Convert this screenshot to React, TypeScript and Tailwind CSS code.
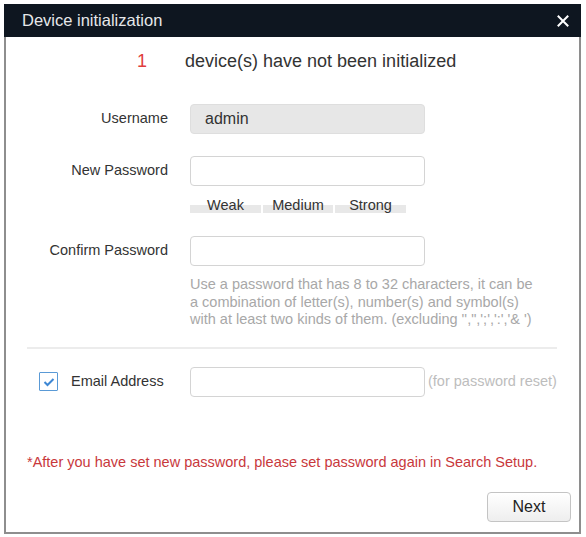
import React from "react";

const font = { fontFamily: '"Liberation Sans", Arial, sans-serif' };

function Row({ label, children }: { label: string; children: React.ReactNode }) {
  return (
    <div className="flex items-center">
      <div className="w-[162px] text-right text-[14.5px] text-[#333]">{label}</div>
      <div className="ml-[22px]">{children}</div>
    </div>
  );
}

export default function App() {
  return (
    <div className="w-[586px] h-[537px] bg-white pt-[4px] pl-[4px]" style={font}>
      <div className="w-[577px] h-[530px] border-2 border-t-0 border-[#8e8e8e] flex flex-col">
        <div className="h-[33px] bg-[#0e1620] flex items-center justify-between pl-[18px] pr-[10px] -mx-[2px]">
          <span className="text-[16.5px] text-[#e6e8ea]">Device initialization</span>
          <svg width="12" height="12" viewBox="0 0 12 12" className="mr-[2px]">
            <path d="M1.5 1.5 L10.5 10.5 M10.5 1.5 L1.5 10.5" stroke="#ffffff" strokeWidth="2" strokeLinecap="square" />
          </svg>
        </div>
        <div className="flex flex-col">
          <div className="flex items-center h-[24px] mt-[12px] pl-[131px]">
            <span className="w-[48px] text-[18px] text-[#e03c3c]">1</span>
            <span className="text-[18px] text-[#333]">device(s) have not been initialized</span>
          </div>
          <div className="mt-[31px]">
            <Row label="Username">
              <div className="w-[235px] h-[30px] rounded-[4px] bg-[#e7e7e7] border border-[#dedede] flex items-center pl-[14px] text-[16px] text-[#333]">
                admin
              </div>
            </Row>
          </div>
          <div className="mt-[22px]">
            <Row label="New Password">
              <div className="w-[235px] h-[30px] rounded-[4px] bg-white border border-[#d4d4d4]" />
            </Row>
          </div>
          <div className="mt-[11px] flex pl-[184px] gap-[2px]">
            {["Weak", "Medium", "Strong"].map((t, i) => (
              <div
                key={t}
                className={`h-[17px] leading-[17px] text-center text-[14.5px] text-[#333] bg-[linear-gradient(to_bottom,transparent_8px,#e8e8e8_8px,#e8e8e8_16px,transparent_16px)] ${i === 1 ? "w-[70px]" : "w-[71px]"}`}
              >
                {t}
              </div>
            ))}
          </div>
          <div className="mt-[22px]">
            <Row label="Confirm Password">
              <div className="w-[235px] h-[30px] rounded-[4px] bg-white border border-[#d4d4d4]" />
            </Row>
          </div>
          <div className="mt-[10px] pl-[184px] text-[14.5px] leading-[17.5px] text-[#a8a8a8]">
            <div>Use a password that has 8 to 32 characters, it can be</div>
            <div>a combination of letter(s), number(s) and symbol(s)</div>
            <div>with at least two kinds of them. (excluding '',&quot;,';',':','&amp; ')</div>
          </div>
          <div className="mt-[18px] ml-[21px] w-[530px] h-[2px] bg-[#ececec]" />
          <div className="mt-[18px] flex items-center">
            <div className="w-[162px] flex items-center pl-[33px]">
              <div className="w-[19px] h-[19px] border border-[#5a9ad6] bg-white flex items-center justify-center rounded-[1px]">
                <svg width="12" height="10" viewBox="0 0 12 10">
                  <path d="M1.5 5 L4.5 8 L10.5 2" fill="none" stroke="#3f88d4" strokeWidth="2" />
                </svg>
              </div>
              <span className="ml-[13px] text-[14.5px] text-[#333] whitespace-nowrap">Email Address</span>
            </div>
            <div className="ml-[22px] w-[235px] h-[30px] rounded-[4px] bg-white border border-[#d4d4d4]" />
            <span className="ml-[3px] text-[14.5px] text-[#bdbdbd] whitespace-nowrap">(for password reset)</span>
          </div>
          <div className="mt-[56px] pl-[21px] text-[14.5px] leading-[18px] text-[#c8383c]">
            *After you have set new password, please set password again in Search Setup.
          </div>
          <div className="mt-[21px] flex justify-end pr-[8px]">
            <div className="w-[84px] h-[30px] rounded-[4px] border border-[#c4c4c4] bg-[linear-gradient(to_bottom,#ffffff,#eeeeee)] flex items-center justify-center text-[16px] text-[#222]">
              Next
            </div>
          </div>
        </div>
      </div>
    </div>
  );
}
